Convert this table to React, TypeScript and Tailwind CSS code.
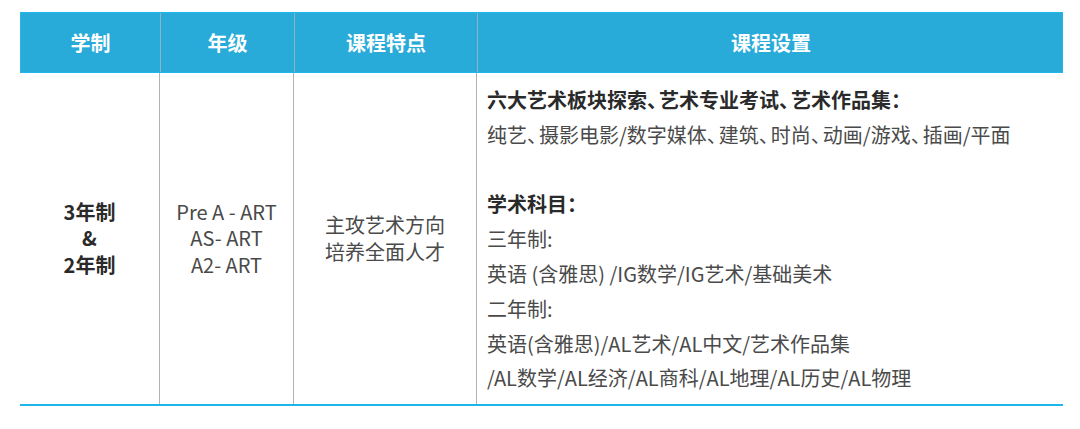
import React from "react";

const font = { fontFamily: '"Noto Sans CJK SC", "Noto Sans", sans-serif' };

function D() {
  return <span className="tracking-[-8px]">、</span>;
}

export default function App() {
  return (
    <div className="w-[1080px] h-[429px] bg-white overflow-hidden" style={font}>
      <div className="ml-[20px] pt-[12px] w-[1043px]">
        {/* header */}
        <div className="grid grid-cols-[139px_134px_183px_587px] h-[61px] bg-[#29abd9] border border-[#22b7ec] text-white font-bold text-[20px]">
          <div className="flex items-center justify-center">学制</div>
          <div className="flex items-center justify-center border-l border-[#8fb3c4]">年级</div>
          <div className="flex items-center justify-center border-l border-[#8fb3c4]">课程特点</div>
          <div className="flex items-center justify-center border-l border-[#8fb3c4]">课程设置</div>
        </div>
        {/* body */}
        <div className="grid grid-cols-[139px_134px_183px_587px] h-[333px] border-b-2 border-[#1db6e9]">
          <div className="flex flex-col items-center justify-center text-[20px] leading-[26.5px] font-bold text-[#2a2a2a]">
            <div>3年制</div>
            <div>&amp;</div>
            <div>2年制</div>
          </div>
          <div className="flex flex-col items-center justify-center border-l border-[#b3b3b3] text-[20px] leading-[26.5px] text-[#4a4a4a]">
            <div>Pre A - ART</div>
            <div>AS- ART</div>
            <div>A2- ART</div>
          </div>
          <div className="flex flex-col items-center justify-center border-l border-[#b3b3b3] text-[20px] leading-[26.5px] text-[#4a4a4a]">
            <div>主攻艺术方向</div>
            <div>培养全面人才</div>
          </div>
          <div className="flex flex-col border-l border-[#b3b3b3] pl-[10px] pt-[10px] text-[20px] leading-[34.8px] text-[#4a4a4a] whitespace-nowrap">
            <div className="font-bold text-[#2a2a2a]">
              六大艺术板块探索<D />艺术专业考试<D />艺术作品集：
            </div>
            <div>
              纯艺<D />摄影电影/数字媒体<D />建筑<D />时尚<D />动画/游戏<D />插画/平面
            </div>
            <div className="h-[34.8px]"></div>
            <div className="font-bold text-[#2a2a2a]">学术科目：</div>
            <div>三年制:</div>
            <div>英语 (含雅思) /IG数学/IG艺术/基础美术</div>
            <div>二年制:</div>
            <div>英语(含雅思)/AL艺术/AL中文/艺术作品集</div>
            <div>/AL数学/AL经济/AL商科/AL地理/AL历史/AL物理</div>
          </div>
        </div>
      </div>
    </div>
  );
}
